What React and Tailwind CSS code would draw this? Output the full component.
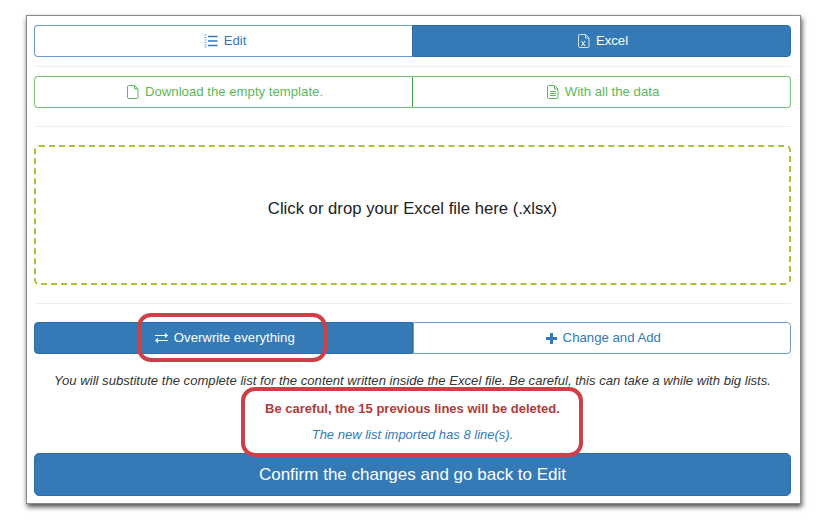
import React from 'react';

const FONT = "font-['Liberation_Sans',Arial,sans-serif]";

const ListIcon = () => (
  <svg width="14" height="14" viewBox="0 0 14 14" className="text-[#337ab7]">
    <path d="M4 2.500h9.500M4 7h9.500M4 11.500h9.500" stroke="currentColor" strokeWidth="1.700" fill="none" />
    <path d="M0.500 0.500h2v1h-2zM0.500 3h2v1h-2zM0.500 5.500h2v1h-2zM0.500 8h2v1h-2zM0.500 10.500h2v1h-2zM0.500 12.500h2v1h-2z" fill="currentColor" opacity="0.7" />
  </svg>
);

const ExcelIcon = () => (
  <svg width="12" height="14" viewBox="0 0 12 14" fill="none" stroke="#d5e2ee" strokeWidth="1">
    <path d="M1.500 0.500h6l3.500 3.500v8.500a1 1 0 0 1-1 1h-8.500a1 1 0 0 1-1-1v-11a1 1 0 0 1 1-1z" />
    <path d="M7.500 0.500v3.500h3.500" />
    <path d="M3.500 7l3.500 5M7 7l-3.500 5" stroke="#fff" />
  </svg>
);

const FileIcon = ({ lines }) => (
  <svg width="12" height="14" viewBox="0 0 12 14" fill="none" stroke="#5cb85c" strokeWidth="1">
    <path d="M1.500 0.500h6l3.500 3.500v8.500a1 1 0 0 1-1 1h-8.500a1 1 0 0 1-1-1v-11a1 1 0 0 1 1-1z" />
    <path d="M7.500 0.500v3.500h3.500" />
    {lines && <path d="M3 6.500h6M3 8.500h6M3 10.500h6" />}
  </svg>
);

const SwapIcon = () => (
  <svg width="13" height="12" viewBox="0 0 13 12" fill="#fff">
    <path d="M0 3h10V0.800l3 2.700-3 2.700V4H0z" />
    <path d="M13 8H3V5.800L0 8.500l3 2.700V9h10z" />
  </svg>
);

const PlusIcon = () => (
  <svg width="11" height="11" viewBox="0 0 11 11" fill="#337ab7">
    <path d="M4 0h3v4h4v3H7v4H4V7H0V4h4z" />
  </svg>
);

const Divider = ({ className }) => <div className={`h-px bg-[#eeeeee] ${className}`} />;

export default function App() {
  return (
    <div className={`${FONT} w-[836px] h-[529px] bg-white pt-[15px] pl-[26px] overflow-hidden`}>
      <div className="relative w-[775px] h-[489px] bg-white border border-[#8a8a8a] pl-[7px] pr-[9px] pt-[9px] shadow-[1px_3px_5px_rgba(0,0,0,0.7)]">
        <div className="flex h-[32px] text-[13.200px]">
          <div className="flex-1 flex items-center justify-center gap-[6px] pl-[3px] border border-[#6b9ac4] rounded-l-[4px] border-r-0 text-[#337ab7]">
            <ListIcon />
            <span>Edit</span>
          </div>
          <div className="flex-1 flex items-center justify-center gap-[6px] pl-[3px] bg-[#337ab7] border border-[#2e6da4] rounded-r-[4px] text-white font-normal">
            <ExcelIcon />
            <span>Excel</span>
          </div>
        </div>

        <Divider className="mt-[9px]" />

        <div className="flex h-[32px] mt-[9px] text-[13.200px] text-[#5cb85c]">
          <div className="flex-1 flex items-center justify-center gap-[6px] pl-[3px] border border-[#74c374] rounded-l-[4px] border-r-0">
            <FileIcon />
            <span>Download the empty template.</span>
          </div>
          <div className="flex-1 flex items-center justify-center gap-[6px] pl-[3px] border border-[#74c374] border-l-[#3f9f3f] rounded-r-[4px]">
            <FileIcon lines />
            <span>With all the data</span>
          </div>
        </div>

        <Divider className="mt-[18px]" />

        <div className="h-[140px] mt-[18px] pb-[12px] border-2 border-dashed border-[#a3c639] rounded-[5px] flex items-center justify-center text-[16.700px] text-[#222222]">
          Click or drop your Excel file here (.xlsx)
        </div>

        <Divider className="mt-[18px]" />

        <div className="flex h-[32px] mt-[18px] text-[13.200px]">
          <div className="flex-1 flex items-center justify-center gap-[6px] pl-[3px] bg-[#337ab7] border border-[#2e6da4] rounded-l-[4px] text-white">
            <SwapIcon />
            <span>Overwrite everything</span>
          </div>
          <div className="flex-1 flex items-center justify-center gap-[6px] pl-[3px] border border-[#6b9ac4] rounded-r-[4px] text-[#337ab7]">
            <PlusIcon />
            <span>Change and Add</span>
          </div>
        </div>

        <p className="mt-[19px] text-center italic text-[13.100px] leading-[16px] text-[#333333]">
          You will substitute the complete list for the content written inside the Excel file. Be careful, this can take a while with big lists.
        </p>
        <p className="mt-[12px] text-center font-bold text-[13px] leading-[16px] text-[#b13a3a]">
          Be careful, the 15 previous lines will be deleted.
        </p>
        <p className="mt-[10px] text-center italic text-[13px] leading-[16px] text-[#337ab7]">
          The new list imported has 8 line(s).
        </p>

        <div className="mt-[10px] h-[43px] bg-[#337ab7] border border-[#2e6da4] rounded-[5px] flex items-center justify-center text-[17px] text-white">
          Confirm the changes and go back to Edit
        </div>

        {/* red annotation boxes drawn over the screenshot */}
        <div className="absolute left-[110px] top-[297px] w-[190px] h-[49px] border-[4px] border-[#cc4148] rounded-[14px]" />
        <div className="absolute left-[214px] top-[371px] w-[342px] h-[70px] border-[4px] border-[#cc4148] rounded-[14px]" />
      </div>
    </div>
  );
}
